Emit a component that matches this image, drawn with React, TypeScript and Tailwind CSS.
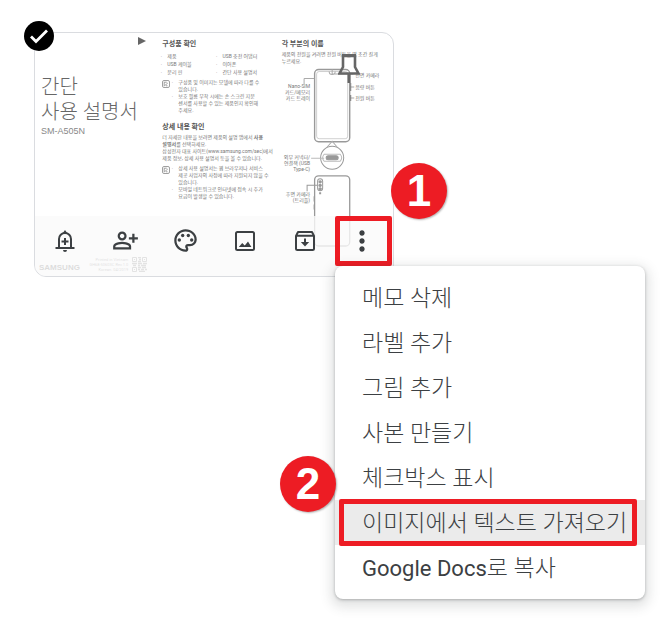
import type { ReactNode } from "react"
import { MdMoreVert, MdOutlinePalette, MdOutlinePersonAddAlt } from "react-icons/md"

function BellPlusIcon() {
  return (
    <svg viewBox="0 0 20 22" className="h-[22px] w-5" fill="none" stroke="currentColor" strokeWidth="2">
      <path d="M.5 18h19M4 18V9a6 6 0 0 1 12 0v9M10 8v7M6.500 11.500h7" />
      <path d="M10 0l2.500 3.500h-5zM8 20h4a2 2 0 0 1-4 0z" fill="currentColor" stroke="none" />
    </svg>
  )
}

function ImageIcon() {
  return (
    <svg viewBox="0 0 20 20" className="size-5" fill="none" stroke="currentColor" strokeWidth="2">
      <rect x="1" y="1" width="18" height="18" rx="1.500" />
      <path d="M3.800 16l3.400-4 2.600 2.400 3.200-4L16.400 16z" fill="currentColor" stroke="none" />
    </svg>
  )
}

function ArchiveIcon() {
  return (
    <svg viewBox="0 0 20 20" className="size-5" fill="none" stroke="currentColor" strokeWidth="2">
      <path d="M1 5l2-4h14l2 4v12.500q0 1.500-1.500 1.500h-15Q1 19 1 17.500z" strokeLinejoin="round" />
      <path d="M1 4.800h18M10 7.500v5" />
      <path d="M5.800 11h8.400L10 15.500z" fill="currentColor" stroke="none" />
    </svg>
  )
}

const tools = [
  { label: "알림 추가", icon: <BellPlusIcon /> },
  { label: "공동작업자", icon: <MdOutlinePersonAddAlt className="size-[27px]" /> },
  { label: "배경 옵션", icon: <MdOutlinePalette className="size-[27px]" /> },
  { label: "이미지 추가", icon: <ImageIcon /> },
  { label: "보관처리", icon: <ArchiveIcon /> },
]

const menuItems = [
  { label: "메모 삭제" },
  { label: "라벨 추가" },
  { label: "그림 추가" },
  { label: "사본 만들기" },
  { label: "체크박스 표시" },
  { label: "이미지에서 텍스트 가져오기", active: true },
  { product: "Google Docs", label: "로 복사" },
]

const parts = ["제품", "USB 충전 어댑터", "USB 케이블", "이어폰", "분리 핀", "간단 사용 설명서"]

function StepBadge({ step, className }: { step: number; className: string }) {
  return (
    <span
      className={`absolute flex size-14 items-center justify-center rounded-full bg-[#ed1c24] font-['Liberation_Sans',Arial,sans-serif] text-[44px] leading-none font-bold text-white shadow-[1px_1px_2px_rgba(0,0,0,0.3)] ${className}`}
    >
      {step}
    </span>
  )
}

function Note({ children }: { children: ReactNode }) {
  return (
    <div className="flex gap-1">
      <svg viewBox="0 0 8 8" className="mt-px size-2 shrink-0" fill="none" stroke="#888" strokeWidth="0.8">
        <rect x="0.5" y="0.5" width="7" height="7" rx="1.5" />
        <path d="M2.2 6V2.2h2.6M2.5 5.8 5.8 3M4 5.8h1.5" />
      </svg>
      <ul className="list-['·_'] whitespace-nowrap *:pl-1">{children}</ul>
    </div>
  )
}

function PhoneDiagram() {
  return (
    <svg viewBox="275 65 119 182" className="w-full" fill="none" stroke="#999" strokeWidth="1">
      <rect x="315.5" y="69.5" width="35" height="72" rx="4" strokeWidth="1.4" />
      <rect x="317.5" y="71.5" width="31" height="67" rx="2.5" stroke="#bbb" strokeWidth="0.7" />
      <path d="M330 71.5q0 3 3 3t3-3M333 69.5V74h21M305 78.5h10M305 78.5V84M351 87h4M351 98h4" stroke="#aaa" />
      <path d="M351.5 83v8M351.5 95v6" stroke="#777" />
      <path d="M327 148l6-7 6 7" stroke="#aaa" />
      <circle cx="333" cy="157.500" r="11.500" fill="#fff" />
      <rect x="327" y="155.500" width="12" height="4" rx="2" fill="#999" />
      <path d="M325 154q-3 3.500 0 7h16q3-3.500 0-7zM312 158h13" stroke="#bbb" />
      <rect x="315.5" y="175.5" width="35" height="70" rx="4" strokeWidth="1.3" />
      <path d="M315 196v5M315 204v5M308 191v-6h10" />
      <rect x="318.500" y="178.500" width="5" height="12" rx="2.500" />
      <circle cx="321" cy="181.500" r="1.200" fill="#999" />
      <circle cx="321" cy="185" r="1.200" fill="#999" />
      <circle cx="321" cy="188.500" r="1.200" fill="#999" />
      <path d="M321 192v2" strokeWidth="2" />
      <g fill="#777" stroke="none" fontSize="5">
        <g textAnchor="end">
          <text x="311" y="88">Nano-SIM</text>
          <text x="311" y="94">카드/메모리</text>
          <text x="311" y="100">카드 트레이</text>
          <text x="311" y="159">외부 커넥터/</text>
          <text x="311" y="165">연결잭 (USB</text>
          <text x="311" y="171">Type-C)</text>
          <text x="311" y="196">후면 카메라</text>
          <text x="311" y="202">(트리플)</text>
        </g>
        <text x="356" y="77">전면 카메라</text>
        <text x="356" y="89">음량 버튼</text>
        <text x="356" y="100">전원 버튼</text>
      </g>
    </svg>
  )
}

function QrCode() {
  return (
    <svg viewBox="0 0 15 15" className="size-[15px]" stroke="#888" fill="none">
      <path d="M.5.5h4v4h-4zM10.500.5h4v4h-4zM.5 10.500h4v4h-4zM2 2.500h1M12 2.500h1M2 12.500h1" />
      <path d="M6 .5h3M7 2.500h2M6 4.500h3M0 6.500h5M6 6.500h4M11 6.500h4M1 8.500h3M6 8.500h2M9 8.500h5M6 10.500h3M10 10.500h4M6 12.500h2M9 12.500h3M13 12.500h2M7 14.500h6" strokeWidth="1.300" />
    </svg>
  )
}

function ManualPage() {
  return (
    <div className="grid grid-cols-3 text-[5px] leading-[7px] text-[#777]">
      <section className="flex flex-col pt-1 pr-2 pl-1.5">
        <svg viewBox="0 0 8 8" className="size-2 self-end" fill="#666">
          <path d="M0 0v8l8-4z" />
        </svg>
        <h1 className="mt-[30px] text-[20px] leading-[25px] font-light whitespace-nowrap text-[#666]">
          간단
          <br />
          사용 설명서
        </h1>
        <p className="font-['Liberation_Sans',Arial,sans-serif] text-[9px] leading-3 text-[#888]">SM-A505N</p>
        <div className="mt-auto -mr-px -ml-0.5 flex items-center justify-between pb-1">
          <span className="pt-1.5 font-['Liberation_Sans',Arial,sans-serif] text-[8px] font-bold text-[#666]">SAMSUNG</span>
          <div className="flex items-center gap-1 text-right text-[4px] leading-[5px] whitespace-nowrap">
            <p>
              Printed in Vietnam
              <br />
              GH68-50603C Rev.1.0
              <br />
              Korean. 04/2019
            </p>
            <QrCode />
          </div>
        </div>
      </section>

      <section className="pt-1.5 pl-2">
        <h2 className="text-[7px] leading-[10px] font-bold text-[#555]">구성품 확인</h2>
        <ul className="mt-[3px] grid list-['·_'] grid-cols-2 pl-px leading-2 whitespace-nowrap *:pl-1">
          {parts.map((part) => (
            <li key={part}>{part}</li>
          ))}
        </ul>
        <div className="mt-[3px]">
          <Note>
            <li>
              구성품 및 이미지는 모델에 따라 다를 수
              <br />
              있습니다.
            </li>
            <li>
              보호 필름 부착 시에는 손 스크린 지문
              <br />
              센서를 사용할 수 있는 제품인지 확인해
              <br />
              주세요.
            </li>
          </Note>
        </div>
        <h2 className="mt-2 text-[7px] leading-[10px] font-bold text-[#555]">상세 내용 확인</h2>
        <p className="mt-[2px] whitespace-nowrap">
          더 자세한 내용을 보려면 제품의 설명 앱에서 <b>사용</b>
          <br />
          <b>설명서</b>를 선택하세요.
          <br />
          삼성전자 대표 사이트(www.samsung.com/sec)에서
          <br />
          제품 정보, 상세 사용 설명서 등을 볼 수 있습니다.
        </p>
        <div className="mt-[3px]">
          <Note>
            <li>
              상세 사용 설명서는 웹 브라우저나 서비스
              <br />
              제공 사업자의 사정에 따라 지원되지 않을 수
              <br />
              있습니다.
            </li>
            <li>
              모바일 네트워크로 인터넷에 접속 시 추가
              <br />
              요금이 발생할 수 있습니다.
            </li>
          </Note>
        </div>
      </section>

      <section className="pt-1.5 pb-7">
        <div className="pl-2">
          <h2 className="text-[7px] leading-[10px] font-bold text-[#555]">각 부분의 이름</h2>
          <p className="mt-[2px] whitespace-nowrap">
            제품의 전원을 켜려면 전원 버튼을 몇 초간 길게
            <br />
            누르세요.
          </p>
        </div>
        <PhoneDiagram />
      </section>
    </div>
  )
}

export default function App() {
  return (
    <main className="min-h-screen bg-white px-[34px] pt-8 font-[Roboto,'Noto_Sans_CJK_KR',sans-serif]">
      <div className="relative w-full max-w-[360px]">
        <article className="relative overflow-hidden rounded-xl border border-[#dadce0] bg-white">
          <ManualPage />

          <button type="button" aria-label="메모 고정" className="absolute top-[21px] right-[33px]">
            <svg viewBox="0 0 22 30" className="h-[30px] w-[22px]" fill="none" stroke="#666">
              <path d="M5 2h12v11l3.500 6.500h-19L5 13z" strokeWidth="2.600" />
              <path d="M4 1.500h14" strokeWidth="3" />
              <path d="M11 19v10" strokeWidth="3" />
            </svg>
          </button>

          <div className="absolute inset-x-0 bottom-0 flex h-[60px] items-start bg-[#fafafa]/80">
            {tools.map(({ label, icon }) => (
              <button key={label} type="button" aria-label={label} className="flex h-[50px] w-15 items-center justify-center text-[#3c4043]">
                {icon}
              </button>
            ))}
            <button
              type="button"
              aria-label="더보기"
              className="flex h-[50px] w-[57px] items-center justify-center rounded-xs border-5 border-[#ed1c24] pr-1 text-[#3c4043]"
            >
              <MdMoreVert className="size-8 shrink-0" />
            </button>
          </div>
        </article>

        <button
          type="button"
          aria-label="메모 선택"
          className="absolute -top-[11px] -left-2.5 flex size-[30px] items-center justify-center rounded-full bg-black"
        >
          <svg viewBox="0 0 30 30" className="size-[30px]" fill="none" stroke="#fff" strokeWidth="2.800">
            <path d="M7 15.500l5 5L23 9.500" />
          </svg>
        </button>

        <div
          role="menu"
          className="absolute top-[234px] left-[301px] w-[310px] rounded-lg bg-white py-[9px] shadow-[0_1px_3px_rgba(60,64,67,0.35),0_4px_12px_4px_rgba(60,64,67,0.15)]"
        >
          {menuItems.map(({ label, product, active }) => (
            <button
              key={label}
              type="button"
              role="menuitem"
              className={`relative block h-[45px] w-full pl-[27px] text-left text-[23px] leading-[47px] font-light whitespace-nowrap text-[#3c4043] ${active ? "bg-[#ebebeb]" : ""}`}
            >
              {product && <span className="text-[22px] font-normal">{product}</span>}
              {label}
              {active && <span className="absolute -inset-y-px right-2 left-1 rounded-xs border-5 border-[#ed1c24]" />}
            </button>
          ))}
        </div>

        <StepBadge step={1} className="top-[131px] left-[357px]" />
        <StepBadge step={2} className="top-[424px] left-[246px]" />
      </div>
    </main>
  )
}
